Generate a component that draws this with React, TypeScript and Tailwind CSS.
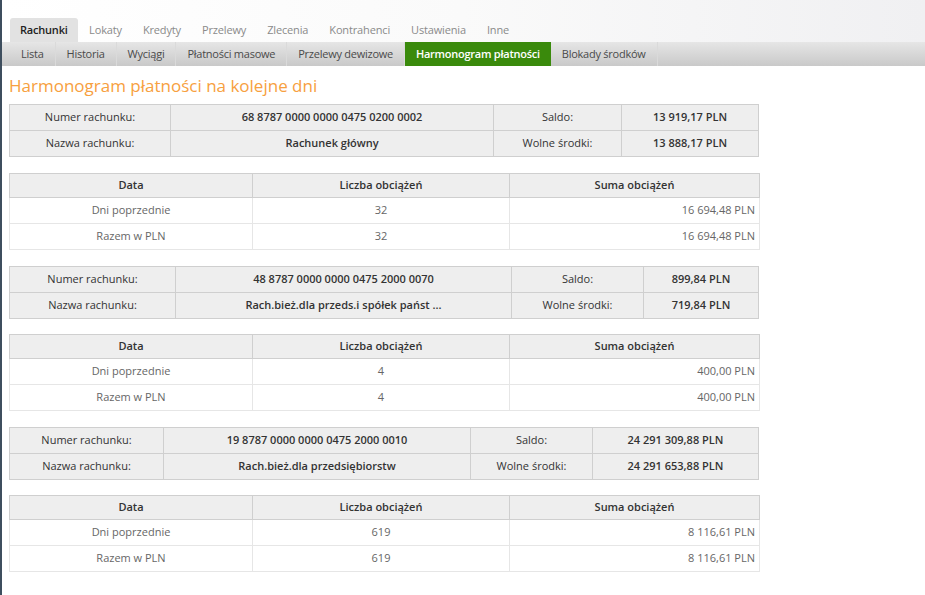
import React from "react";

const MAIN_TABS = ["Rachunki", "Lokaty", "Kredyty", "Przelewy", "Zlecenia", "Kontrahenci", "Ustawienia", "Inne"];
const SUB_TABS = ["Lista", "Historia", "Wyciągi", "Płatności masowe", "Przelewy dewizowe", "Harmonogram płatności", "Blokady środków"];

type Account = {
  number: string;
  name: string;
  saldo: string;
  free: string;
  cols: [number, number, number, number];
  count: string;
  sum: string;
};

const ACCOUNTS: Account[] = [
  {
    number: "68 8787 0000 0000 0475 0200 0002",
    name: "Rachunek główny",
    saldo: "13 919,17 PLN",
    free: "13 888,17 PLN",
    cols: [161, 323, 128, 137],
    count: "32",
    sum: "16 694,48 PLN",
  },
  {
    number: "48 8787 0000 0000 0475 2000 0070",
    name: "Rach.bież.dla przeds.i spółek państ ...",
    saldo: "899,84 PLN",
    free: "719,84 PLN",
    cols: [166, 336, 132, 115],
    count: "4",
    sum: "400,00 PLN",
  },
  {
    number: "19 8787 0000 0000 0475 2000 0010",
    name: "Rach.bież.dla przedsiębiorstw",
    saldo: "24 291 309,88 PLN",
    free: "24 291 653,88 PLN",
    cols: [154, 307, 122, 166],
    count: "619",
    sum: "8 116,61 PLN",
  },
];

function AccountTable({ a }: { a: Account }) {
  const label = "border border-[#cfcfcf] text-center text-[#333] align-middle h-[26px]";
  const value = "border border-[#cfcfcf] text-center text-[#333] font-semibold align-top pt-[4px] h-[26px]";
  return (
    <table className="w-[750px] border-collapse table-fixed bg-[#eeeeee] text-[11px]">
      <colgroup>
        {a.cols.map((w, i) => (
          <col key={i} style={{ width: w }} />
        ))}
      </colgroup>
      <tbody>
        <tr>
          <td className={label}>Numer rachunku:</td>
          <td className={value}>{a.number}</td>
          <td className={label}>Saldo:</td>
          <td className={value}>{a.saldo}</td>
        </tr>
        <tr>
          <td className={label}>Nazwa rachunku:</td>
          <td className={value}>{a.name}</td>
          <td className={label}>Wolne środki:</td>
          <td className={value}>{a.free}</td>
        </tr>
      </tbody>
    </table>
  );
}

function ChargesTable({ a }: { a: Account }) {
  const th = "border border-[#cfcfcf] bg-[#eeeeee] text-center font-semibold text-[#333] h-[24px]";
  const td = "border border-[#e6e6e6] text-[#666] h-[26px] align-middle";
  return (
    <table className="w-[750px] border-collapse table-fixed text-[11px]">
      <colgroup>
        <col style={{ width: 243 }} />
        <col style={{ width: 257 }} />
        <col style={{ width: 250 }} />
      </colgroup>
      <thead>
        <tr>
          <th className={th}>Data</th>
          <th className={th}>Liczba obciążeń</th>
          <th className={th}>Suma obciążeń</th>
        </tr>
      </thead>
      <tbody>
        {["Dni poprzednie", "Razem w PLN"].map((r) => (
          <tr key={r}>
            <td className={`${td} text-center`}>{r}</td>
            <td className={`${td} text-center`}>{a.count}</td>
            <td className={`${td} text-right pr-[4px]`}>{a.sum}</td>
          </tr>
        ))}
      </tbody>
    </table>
  );
}

export default function App() {
  return (
    <div
      className="min-h-[595px] w-[925px] border-l-2 border-[#3e4e5e] bg-white"
      style={{ fontFamily: '"Open Sans", "Liberation Sans", sans-serif' }}
    >
      <div className="h-[42px] bg-gradient-to-r from-white via-[#fafafa] to-[#f0f0f2] flex items-end pl-[8px]">
        {MAIN_TABS.map((t, i) =>
          i === 0 ? (
            <div key={t} className="h-[24px] px-[10px] mr-[1px] flex items-center rounded-t-[3px] bg-[#e2e2e2] text-[11px] tracking-[-0.2px] font-semibold text-[#222]">
              {t}
            </div>
          ) : (
            <div key={t} className="h-[24px] px-[10.5px] flex items-center text-[11px] tracking-[-0.15px] text-[#8a8a8a]">
              {t}
            </div>
          )
        )}
      </div>
      <div className="h-[24px] bg-gradient-to-b from-[#e6e6e6] to-[#c9c9c9] flex pl-[8px]">
        {SUB_TABS.map((t) =>
          t === "Harmonogram płatności" ? (
            <div key={t} className="px-[11px] flex items-center bg-[#3a8a0c] text-white font-semibold text-[11px] tracking-[-0.25px]">
              {t}
            </div>
          ) : (
            <div key={t} className="px-[11px] flex items-center text-[#4a4a4a] text-[11px] tracking-[-0.25px] border-r border-[#dadada]">
              {t}
            </div>
          )
        )}
      </div>
      <div className="pl-[7px] pt-[8px] pb-[24px]">
        <h1 className="text-[17px] leading-[24px] text-[#f7a040] mb-[6px]">Harmonogram płatności na kolejne dni</h1>
        <div className="flex flex-col">
          {ACCOUNTS.map((a, i) => (
            <div key={i} className={i > 0 ? "mt-[16px]" : ""}>
              <AccountTable a={a} />
              <div className={i > 0 ? "mt-[15px]" : "mt-[16px]"}>
                <ChargesTable a={a} />
              </div>
            </div>
          ))}
        </div>
      </div>
    </div>
  );
}
